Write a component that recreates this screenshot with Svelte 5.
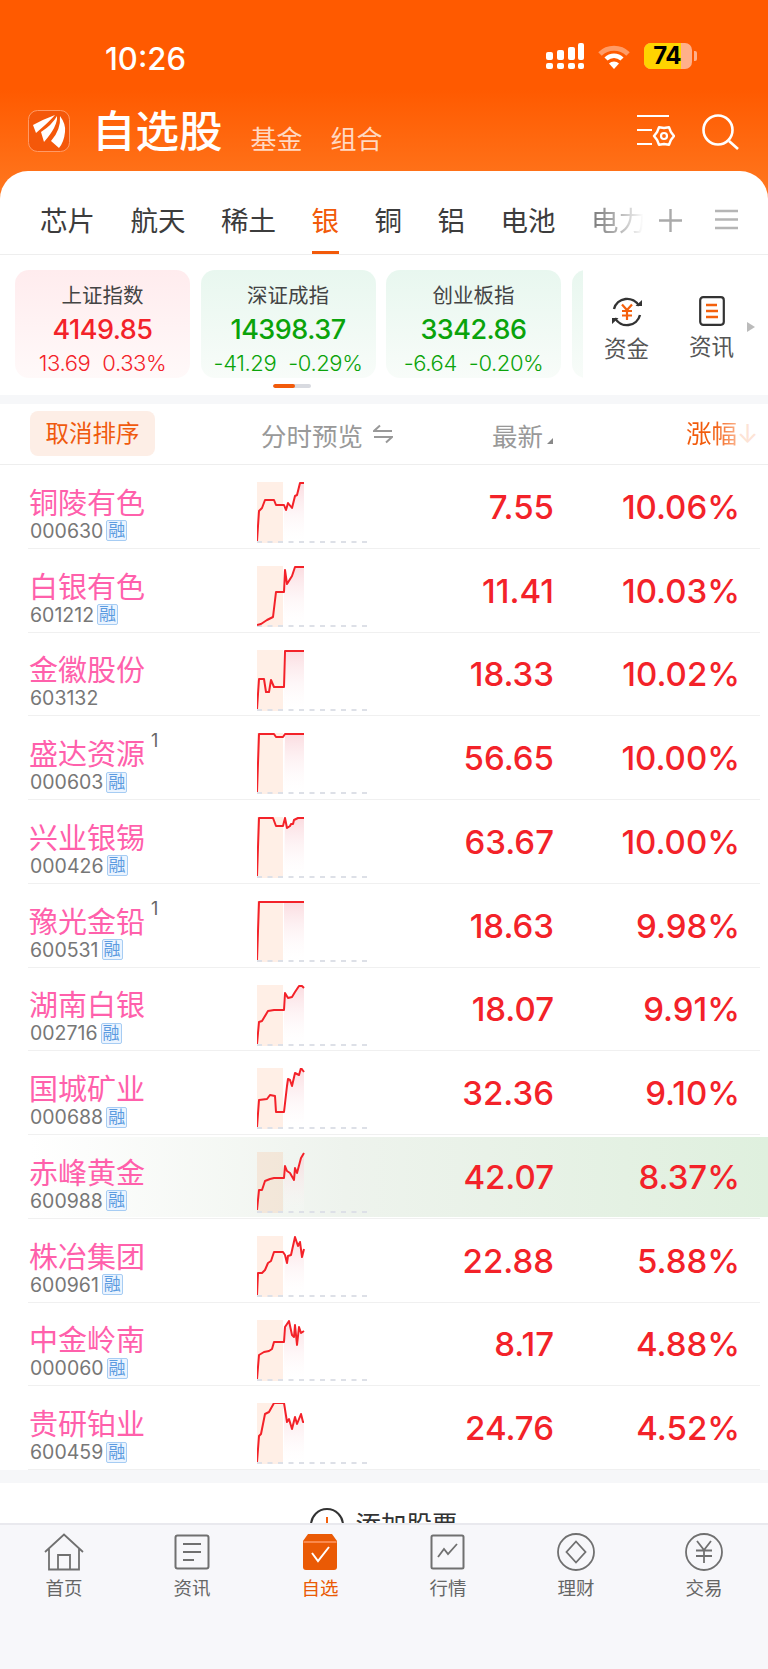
<script>
  // intraday lines, local coords: x 0-47, y 0-60
  const stocks = [
    { name: '铜陵有色', code: '000630', margin: true, price: '7.55', pct: '10.06%', line: '0,59 2,29 5,26 8,18 17,18 19,23 27,23 29,28 31,21 35,26 38,14 40,13 43,1 47,1' },
    { name: '白银有色', code: '601212', margin: true, price: '11.41', pct: '10.03%', line: '0,59 4,58 10,54 16,51 19,26 27,26 28,4 30,18 35,10 38,1 47,1' },
    { name: '金徽股份', code: '603132', margin: false, price: '18.33', pct: '10.02%', line: '0,59 2,29 7,29 9,42 12,42 14,30 17,37 27,37 28,1 47,1' },
    { name: '盛达资源', code: '000603', margin: true, sup: '1', price: '56.65', pct: '10.00%', line: '0,59 2,1 17,1 19,4 26,4 28,1 47,1' },
    { name: '兴业银锡', code: '000426', margin: true, price: '63.67', pct: '10.00%', line: '0,59 2,1 16,1 19,9 26,9 28,1 30,11 33,9 34,7 36,7 37,3 41,1 47,1' },
    { name: '豫光金铅', code: '600531', margin: true, sup: '1', price: '18.63', pct: '9.98%', line: '0,59 2,1 27,1 47,1' },
    { name: '湖南白银', code: '002716', margin: true, price: '18.07', pct: '9.91%', line: '0,59 2,37 5,36 11,26 17,25 27,25 28,8 31,13 35,12 38,7 42,1 45,1 47,3' },
    { name: '国城矿业', code: '000688', margin: true, price: '32.36', pct: '9.10%', line: '0,59 2,32 10,31 13,27 18,28 19,44 27,44 30,18 31,11 33,12 35,18 38,5 42,7 44,0 47,4' },
    { name: '赤峰黄金', code: '600988', margin: true, hl: true, price: '42.07', pct: '8.37%', line: '0,58 2,38 5,38 8,29 13,27 17,26 27,26 28,14 30,19 33,21 37,28 38,16 40,21 44,6 47,1' },
    { name: '株冶集团', code: '600961', margin: true, price: '22.88', pct: '5.88%', line: '0,59 1,37 5,37 8,34 11,27 14,25 17,16 26,16 28,19 30,27 31,20 34,19 38,1 41,10 43,6 45,21 47,13' },
    { name: '中金岭南', code: '000060', margin: true, price: '8.17', pct: '4.88%', line: '0,59 2,35 7,32 12,31 15,29 17,22 27,22 28,7 32,1 35,15 37,17 38,5 40,25 42,7 44,13 47,11' },
    { name: '贵研铂业', code: '600459', margin: true, price: '24.76', pct: '4.52%', line: '0,59 2,33 4,31 8,11 12,9 17,0 27,0 30,19 32,16 35,26 38,14 40,21 44,11 46,19 47,19' }
  ];

  const indices = [
    { name: '上证指数', value: '4149.85', a: '13.69', b: '0.33%', up: true },
    { name: '深证成指', value: '14398.37', a: '-41.29', b: '-0.29%' },
    { name: '创业板指', value: '3342.86', a: '-6.64', b: '-0.20%' }
  ];

  const tabs = ['芯片', '航天', '稀土', '银', '铜', '铝', '电池'];

  // pink area under the line, only after the lunch break mark
  function area(line) {
    const pts = line.split(' ').filter((p) => Number(p.split(',')[0]) >= 27);
    return '27,60 ' + pts.join(' ') + ' 47,60';
  }
</script>

<div class="page">
  <header class="hero">
    <div class="status">
      <span class="time">10:26</span>
      <div class="status-right">
        <svg width="38" height="26" viewBox="0 0 38 26" fill="#fff">
          <rect x="0" y="20" width="7" height="6" rx="2" /><rect x="11" y="20" width="7" height="6" rx="2" /><rect x="22" y="20" width="7" height="6" rx="2" /><rect x="32" y="20" width="6" height="6" rx="2" />
          <rect x="0" y="9" width="7" height="8" rx="2" /><rect x="11" y="7" width="7" height="10" rx="2" /><rect x="22" y="4" width="7" height="13" rx="2" /><rect x="32" y="0" width="6" height="17" rx="2" />
        </svg>
        <svg width="34" height="25" viewBox="0 0 34 25" fill="none">
          <path d="M3 10 A20 20 0 0 1 31 10" stroke="#fff" stroke-opacity=".4" stroke-width="5" />
          <path d="M9 15 A11.5 11.5 0 0 1 25 15" stroke="#fff" stroke-width="4.5" />
          <path d="M17 25 L12 19.5 A7 7 0 0 1 22 19.5 Z" fill="#fff" />
        </svg>
        <div class="battery"><span class="level">74</span><i></i></div>
      </div>
    </div>
    <div class="title-bar">
      <svg class="logo" width="42" height="42" viewBox="0 0 42 42">
        <rect x=".5" y=".5" width="41" height="41" rx="9" fill="#F4580A" stroke="#FF9A66" />
        <path d="M5 15 Q16 9 27 5 Q22 11 8 23 Z M13 22 Q24 15 29 6 Q30 16 16 32 Z M23 31 Q33 20 32 6 Q38 14 37 22 Q36 32 31 38 Z" fill="#fff" />
      </svg>
      <h1>自选股</h1>
      <span class="sub first">基金</span>
      <span class="sub">组合</span>
      <div class="title-icons">
        <svg width="38" height="34" viewBox="0 0 38 34" fill="none" stroke="#fff" stroke-width="2.2">
          <path d="M0 2 H32 M0 16 H15 M0 30 H15" />
          <path d="M37 22 L33.9 26 L32 30.7 L27 30 L22 30.7 L20.1 26 L17 22 L20.1 18 L22 13.3 L27 14 L32 13.3 L33.9 18 Z" stroke-width="2.4" stroke-linejoin="round" />
          <circle cx="27" cy="22" r="3" />
        </svg>
        <svg width="38" height="36" viewBox="0 0 38 36" fill="none" stroke="#fff" stroke-width="2.6">
          <circle cx="16" cy="16" r="14.5" />
          <path d="M27 27 L36 35" />
        </svg>
      </div>
    </div>
  </header>

  <main class="card">
    <nav class="tabs">
      {#each tabs as t}
        <span class="tab" class:active={t === '银'}>{t}</span>
      {/each}
      <span class="tab fade">电力</span>
      <div class="tab-tools">
        <svg width="23" height="23" viewBox="0 0 23 23" stroke="#aaa" stroke-width="2.4"><path d="M11.5 0 V23 M0 11.5 H23" /></svg>
        <svg width="23" height="21" viewBox="0 0 23 21" stroke="#b5b5b5" stroke-width="2.4"><path d="M0 2 H23 M0 10.5 H23 M0 19 H23" /></svg>
      </div>
    </nav>

    <section class="market">
      <div class="index-strip">
        {#each indices as ix}
          <div class="index" class:up={ix.up}>
            <div class="ix-name">{ix.name}</div>
            <div class="ix-value">{ix.value}</div>
            <div class="ix-sub"><span>{ix.a}</span><span>{ix.b}</span></div>
          </div>
        {/each}
        <div class="index"></div>
      </div>
      <div class="shortcuts">
        <div class="shortcut">
          <svg width="32" height="32" viewBox="0 0 32 32" fill="none">
            <path d="M3 13 A13.5 13.5 0 0 1 28 10" stroke="#333" stroke-width="2.4" />
            <path d="M29 19 A13.5 13.5 0 0 1 4 22" stroke="#333" stroke-width="2.4" />
            <path d="M24.5 10 H31 V4 Z M7.5 22 H1 V28 Z" fill="#333" />
            <path d="M11 8.5 L16 14 L21 8.5 M16 14 V24 M11 15 H21 M11 19.5 H21" stroke="#F4600C" stroke-width="2.2" />
          </svg>
          <span>资金</span>
        </div>
        <div class="shortcut">
          <svg width="26" height="30" viewBox="0 0 26 30" fill="none">
            <rect x="1.2" y="1.2" width="23.6" height="27.6" rx="3" stroke="#333" stroke-width="2.2" />
            <path d="M7 9 H18 M7 15 H19 M7 21 H19" stroke="#F4600C" stroke-width="2.4" />
          </svg>
          <span>资讯</span>
        </div>
        <i class="more"></i>
      </div>
    </section>
    <div class="pager"><i></i></div>

    <div class="band"></div>

    <div class="sort-row">
      <span class="cancel">取消排序</span>
      <span class="col-preview">分时预览
        <svg width="20" height="20" viewBox="0 0 20 20" fill="none" stroke="#999" stroke-width="2"><path d="M7 1.5 L1 7 H19 M1 13 H19 L13 18.5" /></svg>
      </span>
      <span class="col-latest">最新<i></i></span>
      <span class="col-rise"><b>涨幅</b><em>↓</em></span>
    </div>

    <div class="list">
      {#each stocks as s, i}
        <div class="row" class:hl={s.hl}>
          <div class="name-col">
            <div class="name">{s.name}{#if s.sup}<sup>{s.sup}</sup>{/if}</div>
            <div class="code">{s.code}{#if s.margin}<span class="badge">融</span>{/if}</div>
          </div>
          <svg class="spark" width="111" height="62" viewBox="0 0 111 62">
            <defs>
              <linearGradient id={'pink' + i} x1="0" y1="0" x2="0" y2="1">
                <stop offset="0" stop-color="#F9CDD3" stop-opacity=".7" />
                <stop offset="1" stop-color="#fff" stop-opacity=".1" />
              </linearGradient>
            </defs>
            <rect x="0" y="0" width="26" height="61" fill="#FF6A1A" fill-opacity=".11" />
            <polygon points={area(s.line)} fill={'url(#pink' + i + ')'} />
            <line x1="0" y1="60" x2="111" y2="60" stroke="#DDE0E7" stroke-width="2" stroke-dasharray="5 5.5" />
            <polyline points={s.line} fill="none" stroke="#F32229" stroke-width="2" stroke-linejoin="round" />
          </svg>
          <div class="price">{s.price}</div>
          <div class="pct">{s.pct}</div>
        </div>
      {/each}
    </div>

    <div class="band tall"></div>

    <div class="add">
      <svg width="34" height="34" viewBox="0 0 34 34" fill="none">
        <circle cx="17" cy="17" r="16" stroke="#333" stroke-width="2" />
        <path d="M17 9 V25 M9 17 H25" stroke="#F4600C" stroke-width="2" />
      </svg>
      <span>添加股票</span>
    </div>
  </main>

  <footer class="tabbar">
    <div class="item">
      <svg width="40" height="38" viewBox="0 0 40 38" fill="none" stroke="#707070" stroke-width="1.8">
        <path d="M1 19 L20 1.5 L39 19 M5 16 V36.5 H35 V16 M14 36.5 V22 H26 V36.5" />
      </svg>
      <span>首页</span>
    </div>
    <div class="item">
      <svg width="40" height="38" viewBox="0 0 40 38" fill="none" stroke="#707070" stroke-width="2">
        <rect x="3.5" y="2.5" width="33" height="33" rx="2" />
        <path d="M11 11 H29 M11 19 H29 M11 27 H22" />
      </svg>
      <span>资讯</span>
    </div>
    <div class="item active">
      <svg width="40" height="38" viewBox="0 0 40 38" fill="none">
        <path d="M8 1 H32 L37 8 V34 Q37 37 34 37 H6 Q3 37 3 34 V8 Z" fill="#EA5A05" />
        <path d="M3.5 9 H36.5" stroke="#FF9A66" stroke-width="1.4" />
        <path d="M12 20 L18 28 L29 14" stroke="#fff" stroke-width="2" />
      </svg>
      <span>自选</span>
    </div>
    <div class="item">
      <svg width="40" height="38" viewBox="0 0 40 38" fill="none" stroke="#707070" stroke-width="2">
        <rect x="3.5" y="2.5" width="32" height="33" rx="1.5" />
        <path d="M10 24 L16 16 L20 21 L29 11" stroke-width="1.8" />
      </svg>
      <span>行情</span>
    </div>
    <div class="item">
      <svg width="40" height="38" viewBox="0 0 40 38" fill="none" stroke="#707070" stroke-width="1.8">
        <circle cx="20" cy="19" r="18" />
        <path d="M20 8.5 L29.5 19 L20 29.5 L10.5 19 Z" />
      </svg>
      <span>理财</span>
    </div>
    <div class="item">
      <svg width="40" height="38" viewBox="0 0 40 38" fill="none" stroke="#707070" stroke-width="1.8">
        <circle cx="20" cy="19" r="18" />
        <path d="M13 8 L20 17 L27 8 M20 17 V30 M12 17.5 H28 M12 23 H28" />
      </svg>
      <span>交易</span>
    </div>
  </footer>
</div>

<style>
  :global(body) {
    margin: 0;
    background: #fff;
  }

  .page {
    width: 768px;
    height: 1669px;
    overflow: hidden;
    display: flex;
    flex-direction: column;
    font-family: Inter, "Noto Sans CJK SC", sans-serif;
    background: #fff linear-gradient(180deg, #ff5a00 0, #ff5a00 90px, #ff7a22 205px) no-repeat;
    background-size: 100% 205px;
  }

  /* header */
  .hero {
    height: 171px;
    flex: none;
    color: #fff;
  }

  .status {
    height: 110px;
    padding: 44px 71px 0 105px;
    box-sizing: border-box;
    display: flex;
    justify-content: space-between;
    align-items: flex-start;
  }

  .time {
    font-size: 31px;
    font-weight: 500;
    line-height: 29px;
  }

  .status-right {
    display: flex;
    align-items: center;
    gap: 13px;
    margin-top: -1px;
  }

  .battery {
    position: relative;
    width: 48px;
    height: 26px;
    border-radius: 7px;
    background: #ffb08a;
    margin-right: 5px;
  }

  .level {
    display: block;
    width: 37px;
    height: 26px;
    border-radius: 7px 0 0 7px;
    background: #ffd400;
    color: #000;
    font-size: 24px;
    font-weight: 700;
    line-height: 26px;
    text-align: right;
    letter-spacing: -0.5px;
  }

  .battery i {
    position: absolute;
    right: -5px;
    top: 8px;
    width: 3px;
    height: 10px;
    border-radius: 0 2px 2px 0;
    background: #ffb08a;
  }

  .title-bar {
    display: flex;
    align-items: flex-start;
    padding-left: 28px;
  }

  .logo {
    flex: none;
  }

  h1 {
    margin: 0 0 0 22px;
    font-size: 43.5px;
    font-weight: 500;
    line-height: 43px;
  }

  .sub {
    margin: 14px 0 0 28px;
    font-size: 26px;
    line-height: 32px;
    color: rgba(255, 255, 255, 0.76);
  }

  .sub.first {
    margin-left: 28px;
  }

  .title-icons {
    margin-left: auto;
    padding: 4px 28px 0 0;
    display: flex;
    align-items: flex-start;
    gap: 27px;
  }

  /* white sheet */
  .card {
    flex: 1;
    min-height: 0;
    overflow: hidden;
    background: #fff;
    border-radius: 28px 28px 0 0;
  }

  .tabs {
    height: 84px;
    padding: 0 0 0 40px;
    display: flex;
    gap: 35.5px;
    align-items: flex-start;
    border-bottom: 1px solid #eee;
    box-sizing: border-box;
    position: relative;
  }

  .tab {
    font-size: 27.5px;
    line-height: 36px;
    padding-top: 32px;
    height: 83px;
    box-sizing: border-box;
    color: #3c3c3c;
    position: relative;
    white-space: nowrap;
  }

  .tab.active {
    color: #f25a0a;
  }

  .tab.active::after {
    content: "";
    position: absolute;
    left: 0;
    right: 0;
    bottom: 0;
    height: 3px;
    background: #f25a0a;
  }

  .tab.fade {
    background: linear-gradient(90deg, #777, #bbb 55%, #fff 96%);
    -webkit-background-clip: text;
    background-clip: text;
    color: transparent;
    margin-right: -23px;
  }

  .tab-tools {
    margin-left: auto;
    padding: 38px 30px 0 0;
    display: flex;
    gap: 33px;
    align-items: flex-start;
    flex: none;
  }

  .market {
    display: flex;
    height: 108px;
    margin-top: 15px;
  }

  .index-strip {
    width: 583px;
    flex: none;
    overflow: hidden;
    display: flex;
    gap: 10.5px;
    padding-left: 15px;
    box-sizing: border-box;
  }

  .index {
    width: 175px;
    flex: none;
    height: 108px;
    border-radius: 14px;
    background: linear-gradient(180deg, #e8f7ef, #f8fcf9);
    text-align: center;
    color: #0aa30a;
  }

  .index.up {
    background: linear-gradient(180deg, #ffecee, #fff9f9);
    color: #f32229;
  }

  .ix-name {
    padding-top: 11px;
    font-size: 20.5px;
    line-height: 30px;
    color: #444;
  }

  .ix-value {
    font-size: 27px;
    font-weight: 500;
    line-height: 36px;
    letter-spacing: -0.5px;
    padding-top: 1px;
  }

  .ix-sub {
    margin-top: 2px;
    display: flex;
    justify-content: center;
    gap: 12px;
    font-size: 22px;
    font-weight: 300;
    line-height: 26px;
    letter-spacing: -0.4px;
  }

  .shortcuts {
    flex: 1;
    position: relative;
    display: flex;
    padding: 26px 0 0 1px;
  }

  .shortcut {
    width: 85px;
    display: flex;
    flex-direction: column;
    align-items: center;
    gap: 4px;
    font-size: 22.5px;
    line-height: 33px;
    color: #555;
    box-sizing: border-box;
  }

  .shortcut svg {
    flex: none;
  }

  .more {
    position: absolute;
    left: 164px;
    top: 52px;
    border-left: 8px solid #bbb;
    border-top: 5.5px solid transparent;
    border-bottom: 5.5px solid transparent;
  }

  .pager {
    width: 38px;
    height: 4px;
    margin: 6px 0 0 273px;
    border-radius: 2px;
    background: #d8dae0;
    overflow: hidden;
  }

  .pager i {
    display: block;
    width: 22px;
    height: 4px;
    border-radius: 2px;
    background: #f25a0a;
  }

  .band {
    height: 9px;
    margin-top: 7px;
    background: #f6f7f9;
  }

  .band.tall {
    height: 13px;
    margin-top: 0;
  }

  .sort-row {
    height: 61px;
    box-sizing: border-box;
    border-bottom: 1px solid #eee;
    display: flex;
    align-items: center;
    padding-left: 30px;
    position: relative;
    font-size: 25.5px;
    color: #999;
  }

  .cancel {
    width: 125px;
    height: 45px;
    border-radius: 8px;
    background: #fdeee6;
    color: #f05a0e;
    font-size: 23.5px;
    line-height: 45px;
    text-align: center;
    margin-top: -2px;
  }

  .col-preview {
    margin-left: 106px;
    width: 231px;
    display: flex;
    align-items: center;
    gap: 10px;
  }

  .col-latest {
    position: relative;
  }

  .col-latest i {
    position: absolute;
    left: 55px;
    bottom: 9px;
    width: 0;
    height: 0;
    border-left: 6px solid transparent;
    border-bottom: 6px solid #888;
  }

  .col-rise {
    position: absolute;
    left: 686px;
    top: 0;
    line-height: 60px;
    white-space: nowrap;
    display: flex;
  }

  .col-rise b {
    font-weight: 400;
    background: linear-gradient(90deg, #f25a0a 55%, #fbb28c);
    -webkit-background-clip: text;
    background-clip: text;
    color: transparent;
  }

  .col-rise em {
    font-style: normal;
    color: #fde3d5;
  }

  .row {
    height: 83.75px;
    box-sizing: border-box;
    position: relative;
    display: flex;
    align-items: center;
    padding-left: 30px;
  }

  .row::after {
    content: "";
    position: absolute;
    left: 28px;
    right: 8px;
    bottom: 0;
    height: 1px;
    background: #f0f0f0;
  }

  .row.hl {
    background: linear-gradient(90deg, rgba(234, 243, 234, 0) 4%, #eef3ed 45%, #dff0de 100%) no-repeat 0 2px / 100% 80px;
  }

  .name-col {
    width: 227px;
    flex: none;
    margin-top: 13px;
  }

  .name {
    font-size: 29px;
    line-height: 38px;
    color: #ff60ab;
    position: relative;
    white-space: nowrap;
    margin-left: -1px;
  }

  sup {
    position: absolute;
    left: 122px;
    top: -7px;
    font-family: Inter, sans-serif;
    font-size: 18px;
    line-height: 24px;
    color: #666;
    vertical-align: baseline;
  }

  .code {
    display: flex;
    align-items: center;
    gap: 3px;
    font-size: 19.5px;
    line-height: 22px;
    color: #777;
    margin-top: -3px;
  }

  .badge {
    width: 21px;
    height: 21px;
    box-sizing: border-box;
    border: 1px solid #a6ccf3;
    border-radius: 2px;
    background: #ebf4ff;
    color: #5b9be0;
    font-size: 17px;
    line-height: 18px;
    text-align: center;
  }

  .spark {
    flex: none;
    align-self: flex-start;
    margin-top: 17px;
  }

  .price {
    width: 186px;
    flex: none;
    text-align: right;
    font-size: 33px;
    font-weight: 500;
    color: #f32229;
  }

  .pct {
    width: 186px;
    flex: none;
    text-align: right;
    font-size: 33px;
    font-weight: 500;
    color: #f32229;
  }

  .add {
    height: 40px;
    overflow: hidden;
    display: flex;
    justify-content: center;
    gap: 11px;
    padding-top: 25px;
    box-sizing: border-box;
    font-size: 25.5px;
    line-height: 34px;
    color: #333;
  }

  .add svg {
    flex: none;
  }

  .tabbar {
    height: 146px;
    flex: none;
    box-sizing: border-box;
    border-top: 2px solid #e9e9ee;
    background: #f7f7fa;
    display: grid;
    grid-template-columns: repeat(6, 1fr);
    align-items: start;
    padding-top: 8px;
  }

  .item {
    display: flex;
    flex-direction: column;
    align-items: center;
    gap: 3px;
    font-size: 18.5px;
    line-height: 28px;
    color: #666;
  }

  .item.active {
    color: #ea5a05;
  }
</style>
